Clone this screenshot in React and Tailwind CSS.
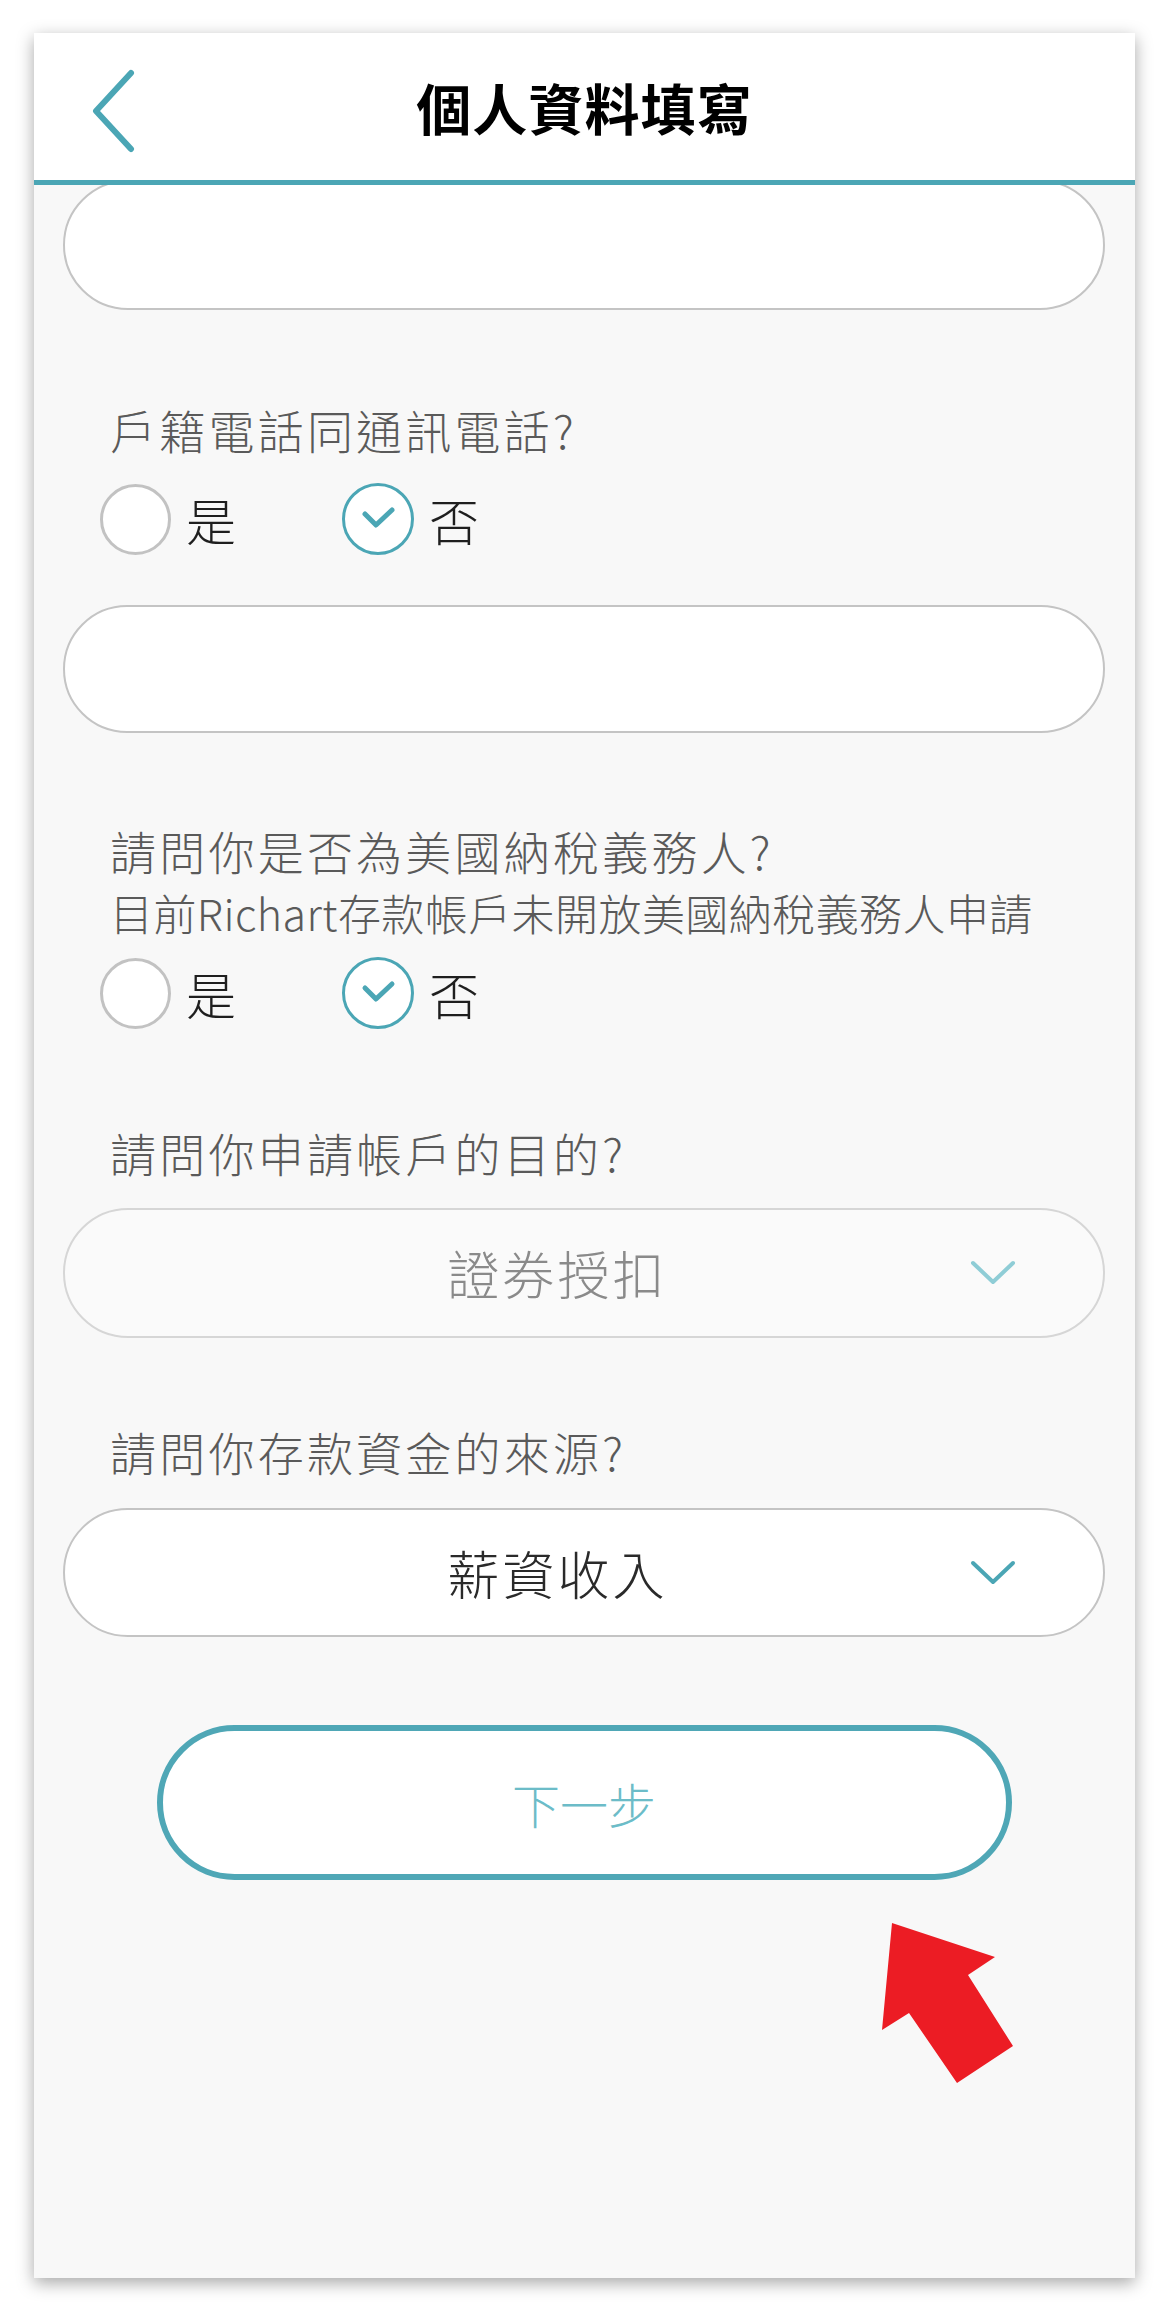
const FONT = { fontFamily: '"Noto Sans CJK TC", "Noto Sans", sans-serif' };

function BackIcon() {
  return (
    <svg width="50" height="84" viewBox="0 0 50 84" fill="none">
      <path d="M42 4 L7 42 L42 80" stroke="#4ba6b5" strokeWidth="6" strokeLinecap="round" strokeLinejoin="round" />
    </svg>
  );
}

function ChevronDown({ color }) {
  return (
    <svg width="46" height="26" viewBox="0 0 46 26" fill="none">
      <path d="M3 3 L23 22 L43 3" stroke={color} strokeWidth="4" strokeLinecap="round" strokeLinejoin="round" />
    </svg>
  );
}

function Radio({ label, checked }) {
  return (
    <div className="flex items-center gap-[15px]">
      {checked ? (
        <div className="w-[72px] h-[72px] rounded-full border-[3px] border-[#4ba6b5] bg-white flex items-center justify-center">
          <svg width="40" height="30" viewBox="0 0 40 30" fill="none">
            <path d="M7 10 L18 21 L34 6" stroke="#4ba6b5" strokeWidth="5" strokeLinecap="round" strokeLinejoin="round" />
          </svg>
        </div>
      ) : (
        <div className="w-[71px] h-[71px] rounded-full border-[3px] border-[#c2c2c2] bg-white" />
      )}
      <span className="text-[50px] leading-none font-light text-[#1f1f1f]">{label}</span>
    </div>
  );
}

function YesNo({ className = '' }) {
  return (
    <div className={`flex items-center gap-[106px] h-[72px] pl-[37px] ${className}`}>
      <Radio label="是" />
      <Radio label="否" checked />
    </div>
  );
}

function Label({ children, className = '' }) {
  return (
    <p className={`pl-[47px] text-[46px] leading-[60px] tracking-[0.07em] font-light text-[#5a5a5a] ${className}`}>
      {children}
    </p>
  );
}

function Select({ value, muted, className = '' }) {
  return (
    <div
      className={`rounded-full border-2 flex items-center pl-[80px] pr-[87px] ${
        muted ? 'bg-[#fafafa] border-[#d6d6d6]' : 'bg-white border-[#c4c4c4]'
      } ${className}`}
    >
      <span
        className={`flex-1 text-center text-[52px] tracking-[0.06em] font-light ${
          muted ? 'text-[#8a8a8a]' : 'text-[#2a2a2a]'
        }`}
      >
        {value}
      </span>
      <ChevronDown color={muted ? '#8fcdd6' : '#4ba6b5'} />
    </div>
  );
}

export default function App() {
  return (
    <div className="w-[1170px] h-[2314px] bg-white pt-[33px] pl-[34px]" style={FONT}>
      <div className="relative w-[1101px] h-[2245px] bg-[#f8f8f8] shadow-[0_5px_16px_rgba(0,0,0,0.35)] flex flex-col overflow-hidden">
        <header className="relative z-10 h-[152px] shrink-0 bg-white border-b-[5px] border-[#4ba6b5] flex items-center justify-center">
          <div className="absolute left-[55px] top-[36px]">
            <BackIcon />
          </div>
          <h1 className="text-[55px] font-bold text-black tracking-[0.02em]">個人資料填寫</h1>
        </header>

        <div className="flex flex-col pl-[29px] pr-[30px]">
          <div className="-mt-[5px] h-[130px] rounded-full border-2 border-[#c4c4c4] bg-white" />

          <Label className="mt-[89px]">戶籍電話同通訊電話?</Label>
          <YesNo className="mt-[24px]" />

          <div className="mt-[50px] h-[128px] rounded-full border-2 border-[#c4c4c4] bg-white" />

          <Label className="mt-[87px]">請問你是否為美國納稅義務人?</Label>
          <p className="mt-[6px] pl-[47px] text-[43px] leading-[53px] tracking-[0.01em] font-light text-[#5a5a5a]">
            目前Richart存款帳戶未開放美國納稅義務人申請
          </p>
          <YesNo className="mt-[18px]" />

          <Label className="mt-[93px]">請問你申請帳戶的目的?</Label>
          <Select value="證券授扣" muted className="mt-[26px] h-[130px]" />

          <Label className="mt-[83px]">請問你存款資金的來源?</Label>
          <Select value="薪資收入" className="mt-[27px] h-[129px]" />

          <button className="mt-[88px] self-center w-[855px] h-[155px] rounded-full border-[6px] border-[#4fa7b6] bg-white text-[48px] font-light text-[#6cbcc8]">
            下一步
          </button>
        </div>

        <svg className="absolute left-[840px] top-[1880px]" width="150" height="180" viewBox="0 0 150 180">
          <polygon points="18,10 121,44 94,62 139,133 83,170 35,100 8,117" fill="#ec1c24" />
        </svg>
      </div>
    </div>
  );
}
